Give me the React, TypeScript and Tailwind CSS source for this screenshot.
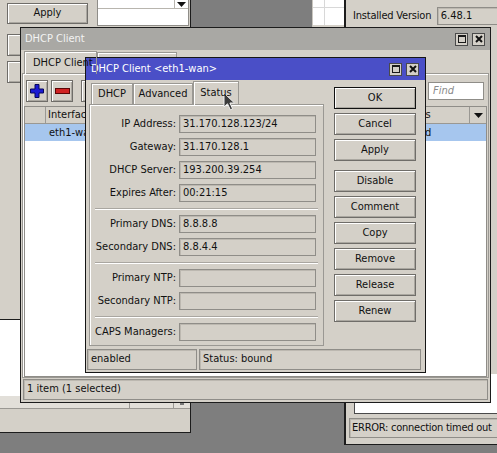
import type { ReactNode } from "react";

const face = "font-[family-name:DejaVu_Sans_Condensed,Liberation_Sans,sans-serif]";
const raised =
  "border border-[#6f6d69] bg-[#d4d0c8] shadow-[inset_1px_1px_0_#ffffff,inset_-1px_-1px_0_#aaa7a0]";
const sunken = "border border-[#8f8d88] bg-[#d4d0c8] shadow-[inset_1px_1px_0_#bcb8b0]";
const pane = "border border-[#9a9893] shadow-[inset_1px_1px_0_#ffffff]";

function TitleButtons() {
  return (
    <div className="flex gap-[4px]">
      <span className="flex h-[13px] w-[13px] items-center justify-center border border-[#4a4a4a] bg-[#d4d0c8]">
        <span className="h-[8px] w-[8px] border border-t-2 border-[#1a1a1a]" />
      </span>
      <span className="flex h-[13px] w-[13px] items-center justify-center border border-[#4a4a4a] bg-[#d4d0c8]">
        <svg width="8" height="8" viewBox="0 0 8 8">
          <path d="M1 1L7 7M7 1L1 7" stroke="#111" strokeWidth="2" />
        </svg>
      </span>
    </div>
  );
}

function DownArrow() {
  return (
    <svg width="9" height="5" viewBox="0 0 9 5">
      <path d="M0 0H9L4.5 5Z" fill="#111" />
    </svg>
  );
}

function Button({ children, main }: { children?: ReactNode; main?: boolean }) {
  return (
    <div
      className={`flex h-[22px] w-[82px] items-center justify-center ${raised} ${main ? "border-[#111]" : ""}`}
    >
      {children}
    </div>
  );
}

function Field({ label, value }: { label: string; value?: string }) {
  return (
    <div className="flex items-center">
      <span className="w-[89px] shrink-0 pr-[3px] text-right">{label}</span>
      <div className={`flex h-[18px] w-[137px] items-center pl-[3px] ${sunken}`}>{value}</div>
    </div>
  );
}

function Separator() {
  return <div className="mx-[5px] mt-[6px] mb-[5px] h-[2px] border-t border-b border-t-[#a9a6a0] border-b-white" />;
}

function Cursor() {
  return (
    <svg className="absolute left-[223px] top-[92px]" width="13" height="19" viewBox="0 0 13 19">
      <path
        d="M1 1L1 15L4.5 11.8L7.3 17.8L9.6 16.8L6.9 11H11.5Z"
        fill="#3c3c3c"
        stroke="#f2f2f2"
        strokeWidth="1"
        strokeLinejoin="round"
      />
    </svg>
  );
}

function BackWindows() {
  return (
    <>
      {/* left window behind */}
      <div className="absolute left-0 top-0 flex h-[433px] w-[191px] flex-col border-r border-b border-[#1c1c1c] bg-[#d4d0c8]">
        <div className="flex pl-[7px]">
          <div className={`mt-[3px] flex h-[21px] w-[81px] items-center justify-center ${raised}`}>Apply</div>
          <div className="ml-[9px] h-[26px] w-[92px] border border-t-0 border-[#8f8d88] bg-white">
            <div className="flex h-[9px] border-b border-[#b8b5ae]">
              <span className="flex-1" />
              <span className="flex w-[14px] items-end justify-center border-l border-[#b8b5ae] pb-[1px]">
                <DownArrow />
              </span>
            </div>
          </div>
        </div>
        <div className="mt-[8px] flex flex-col gap-[5px] pl-[7px]">
          <div className={`h-[22px] w-[81px] ${raised}`} />
          <div className={`h-[22px] w-[81px] ${raised}`} />
        </div>
        <div className="mt-auto h-[77px] border-t border-[#1c1c1c] bg-white" />
        <div className="h-[36px]">
          <div className="flex h-[13px] border-b border-[#9a9893] bg-[#e2dfd9]">
            <span className="w-[130px] border-r border-[#9a9893]" />
            <span className="w-[44px] border-r border-[#9a9893]" />
            <span className="flex flex-1 items-end justify-center pb-[3px]">
              <span className="h-[2px] w-[4px] bg-[#777]" />
            </span>
          </div>
        </div>
      </div>

      {/* small table window behind on the right */}
      <div className="absolute left-[312px] top-0 h-[27px] w-[33px] border-l border-[#c9c6bf] bg-[#d4d0c8]">
        <div className="flex h-[25px] flex-col bg-white">
          <div className="flex h-[8px] border-b border-[#d8d8d8]">
            <span className="w-[12px] border-r border-[#d8d8d8]" />
          </div>
          <div className="flex flex-1">
            <span className="w-[12px] border-r border-[#d8d8d8]" />
          </div>
        </div>
      </div>

      {/* resource window behind on the right */}
      <div className="absolute left-[344px] top-[-20px] flex h-[465px] w-[170px] flex-col border-l-2 border-b border-[#1c1c1c] bg-[#d4d0c8]">
        <div className="mt-[27px] flex items-center">
          <span className="w-[94px] pl-[7px] tracking-[-0.2px]">Installed Version</span>
          <div className={`flex h-[18px] w-[80px] items-center pl-[3px] ${sunken}`}>6.48.1</div>
        </div>
        <div className="mt-[22px] ml-auto h-[6px] w-[16px] border-y border-t-white border-b-[#9a9893]" />
        <div className="mt-auto ml-[8px] h-[40px] border-l border-b border-[#4a4a4a] bg-white" />
        <div
          className={`mt-[4px] mb-[6px] ml-[3px] flex h-[20px] items-center pl-[2px] tracking-[-0.25px] whitespace-nowrap ${sunken}`}
        >
          ERROR: connection timed out
        </div>
      </div>
    </>
  );
}

function ClientList() {
  return (
    <div className="absolute left-[20px] top-[27px] flex h-[376px] w-[471px] flex-col border border-[#1c1c1c] bg-[#d4d0c8]">
      <div className="flex h-[22px] items-center justify-between bg-[#a9a8a4] pr-[5px] pl-[4px] text-[#f3f3f3]">
        <span>DHCP Client</span>
        <TitleButtons />
      </div>

      <div className="flex h-[23px] items-end pl-[3px]">
        <div className={`relative z-10 -mb-[1px] flex h-[23px] w-[73px] items-center border-b-0 pl-[8px] ${pane}`}>
          DHCP Client
        </div>
        <div className={`h-[21px] w-[80px] border-b-0 ${pane}`} />
      </div>

      <div className={`mx-[1px] flex flex-1 flex-col ${pane}`}>
        <div className="flex items-center gap-[3px] pt-[6px] pr-[4px] pl-[3px]">
          <div className={`flex h-[22px] w-[22px] items-center justify-center ${raised}`}>
            <svg width="14" height="14" viewBox="0 0 14 14">
              <path
                d="M5 0.5H9V5H13.5V9H9V13.5H5V9H0.5V5H5Z"
                fill="#1a1ad2"
                stroke="#07075a"
                strokeWidth="1"
              />
            </svg>
          </div>
          <div className={`flex h-[22px] w-[22px] items-center justify-center ${raised}`}>
            <svg width="15" height="6" viewBox="0 0 15 6">
              <rect x="0.5" y="0.5" width="14" height="5" fill="#d02222" stroke="#5a0606" />
            </svg>
          </div>
          <div className={`ml-[5px] h-[22px] w-[22px] ${raised}`} />
          <div className="ml-auto flex h-[18px] w-[56px] items-center border border-[#8f8d88] bg-white pl-[4px] text-[#8a8a8a] italic">
            Find
          </div>
        </div>

        <div className="mx-[1px] mt-[4px] flex flex-1 flex-col border border-[#8f8d88] bg-white">
          <div className="flex h-[17px] bg-[#d4d0c8]">
            <span className="w-[21px] border-r border-b border-[#9a9893]" />
            <span className="flex-1 border-r border-b border-[#9a9893] pl-[2px] leading-[16px]">Interface</span>
            <span className="w-[74px] border-r border-b border-[#9a9893] pl-[3px] leading-[16px]">Status</span>
            <span className="flex w-[16px] items-center justify-center border-b border-[#9a9893]">
              <DownArrow />
            </span>
          </div>
          <div className="flex h-[17px] bg-[#a6c6ee] leading-[17px]">
            <span className="w-[22px]" />
            <span className="flex-1 pl-[2px]">eth1-wan</span>
            <span className="w-[90px] pl-[4px]">bound</span>
          </div>
        </div>
      </div>

      <div className={`mx-[2px] mt-[1px] mb-[2px] flex h-[21px] items-center pl-[3px] ${sunken}`}>
        1 item (1 selected)
      </div>
    </div>
  );
}

function ClientDialog() {
  return (
    <div className="absolute left-[85px] top-[57px] flex w-[341px] flex-col border border-[#151515] bg-[#d4d0c8]">
      <div className="flex h-[22px] items-center justify-between bg-[#4a4fc7] pr-[6px] pl-[5px] text-white">
        <span>DHCP Client &lt;eth1-wan&gt;</span>
        <TitleButtons />
      </div>

      <div className="flex">
        <div className="ml-[3px] flex flex-col">
          <div className="mt-[3px] flex h-[21px] items-end pl-[2px]">
            <div className={`flex h-[21px] w-[42px] items-center justify-center border-b-0 bg-[#cfcbc3] ${pane}`}>
              DHCP
            </div>
            <div className={`flex h-[21px] w-[60px] items-center justify-center border-b-0 bg-[#cfcbc3] ${pane}`}>
              Advanced
            </div>
            <div
              className={`relative z-10 -mb-[1px] flex h-[24px] w-[46px] items-center justify-center border-b-0 ${pane}`}
            >
              Status
            </div>
          </div>
          <div className={`flex h-[242px] w-[235px] flex-col pt-[10px] ${pane}`}>
            <div className="flex flex-col gap-[5px]">
              <Field label="IP Address:" value="31.170.128.123/24" />
              <Field label="Gateway:" value="31.170.128.1" />
              <Field label="DHCP Server:" value="193.200.39.254" />
              <Field label="Expires After:" value="00:21:15" />
            </div>
            <Separator />
            <div className="flex flex-col gap-[5px]">
              <Field label="Primary DNS:" value="8.8.8.8" />
              <Field label="Secondary DNS:" value="8.8.4.4" />
            </div>
            <Separator />
            <div className="flex flex-col gap-[5px]">
              <Field label="Primary NTP:" />
              <Field label="Secondary NTP:" />
            </div>
            <Separator />
            <Field label="CAPS Managers:" />
          </div>
        </div>

        <div className="mt-[7px] ml-[10px] flex flex-col gap-[4px]">
          <Button main>OK</Button>
          <Button>Cancel</Button>
          <Button>Apply</Button>
          <div className="mt-[5px] flex flex-col gap-[4px]">
            <Button>Disable</Button>
            <Button>Comment</Button>
            <Button>Copy</Button>
            <Button>Remove</Button>
            <Button>Release</Button>
            <Button>Renew</Button>
          </div>
        </div>
      </div>

      <div className="mt-[3px] mb-[2px] ml-[1px] flex h-[21px] gap-[2px]">
        <div className={`flex w-[110px] items-center pl-[3px] ${sunken}`}>enabled</div>
        <div className={`flex w-[222px] items-center pl-[3px] ${sunken}`}>Status: bound</div>
      </div>
    </div>
  );
}

export default function App() {
  return (
    <div className={`relative h-[453px] w-[497px] overflow-hidden bg-[#7e7e7e] text-[11px] text-[#111] ${face}`}>
      <BackWindows />
      <ClientList />
      <ClientDialog />
      <Cursor />
    </div>
  );
}
